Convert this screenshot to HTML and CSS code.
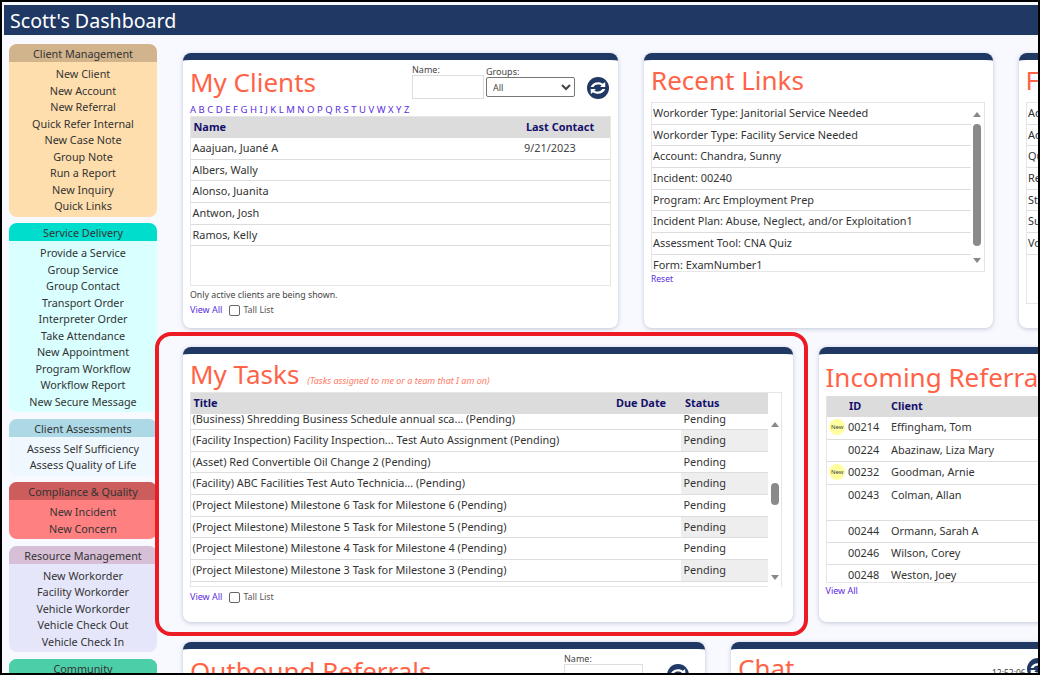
FILE: index.html
```html
<!DOCTYPE html>
<html lang="en">
<head>
    <meta charset="UTF-8">
    <title>Scott's Dashboard</title>
    <link rel="stylesheet" href="styles.css">
</head>
<body>
<div class="frame">
    <div class="topbar">Scott's Dashboard</div>
    <div class="main">
        <!-- Left menu -->
        <div class="sidebar">
            <div class="menu tan">
                <div class="menuHead">Client Management</div>
                <a>New Client</a><a>New Account</a><a>New Referral</a><a>Quick Refer Internal</a><a>New Case Note</a><a>Group Note</a><a>Run a Report</a><a>New Inquiry</a><a>Quick Links</a>
            </div>
            <div class="menu aqua">
                <div class="menuHead">Service Delivery</div>
                <a>Provide a Service</a><a>Group Service</a><a>Group Contact</a><a>Transport Order</a><a>Interpreter Order</a><a>Take Attendance</a><a>New Appointment</a><a>Program Workflow</a><a>Workflow Report</a><a>New Secure Message</a>
            </div>
            <div class="menu blue">
                <div class="menuHead">Client Assessments</div>
                <a>Assess Self Sufficiency</a><a>Assess Quality of Life</a>
            </div>
            <div class="menu red">
                <div class="menuHead">Compliance &amp; Quality</div>
                <a>New Incident</a><a>New Concern</a>
            </div>
            <div class="menu lilac">
                <div class="menuHead">Resource Management</div>
                <a>New Workorder</a><a>Facility Workorder</a><a>Vehicle Workorder</a><a>Vehicle Check Out</a><a>Vehicle Check In</a>
            </div>
            <div class="menu green">
                <div class="menuHead">Community</div>
            </div>
        </div>

        <div class="content">
            <!-- Row 1 -->
            <div class="row row1">
                <div class="card clientsCard">
                    <div class="clientsHead">
                        <h2>My Clients</h2>
                        <div class="field nameField"><label>Name:</label><input type="text" class="nameInput"></div>
                        <div class="field groupField"><label>Groups:</label><select class="groupSelect"><option>All</option></select></div>
                        <svg class="refresh" viewBox="0 0 24 24"><use href="#refreshIcon"/></svg>
                    </div>
                    <div class="alpha"><a>A</a><a>B</a><a>C</a><a>D</a><a>E</a><a>F</a><a>G</a><a>H</a><a>I</a><a>J</a><a>K</a><a>L</a><a>M</a><a>N</a><a>O</a><a>P</a><a>Q</a><a>R</a><a>S</a><a>T</a><a>U</a><a>V</a><a>W</a><a>X</a><a>Y</a><a>Z</a></div>
                    <div class="listBox clientList">
                        <div class="tr th"><span class="grow">Name</span><span class="lastCol">Last Contact</span></div>
                        <div class="tr"><span class="grow">Aaajuan, Juané A</span><span class="lastCol dateVal">9/21/2023</span></div>
                        <div class="tr"><span>Albers, Wally</span></div>
                        <div class="tr"><span>Alonso, Juanita</span></div>
                        <div class="tr"><span>Antwon, Josh</span></div>
                        <div class="tr"><span>Ramos, Kelly</span></div>
                    </div>
                    <div class="note">Only active clients are being shown.</div>
                    <div class="foot"><a>View All</a><span class="box"></span><span>Tall List</span></div>
                </div>

                <div class="card linksCard">
                    <h2>Recent Links</h2>
                    <div class="listBox scrollList linkList">
                        <div class="rows">
                            <div class="tr">Workorder Type: Janitorial Service Needed</div>
                            <div class="tr">Workorder Type: Facility Service Needed</div>
                            <div class="tr">Account: Chandra, Sunny</div>
                            <div class="tr">Incident: 00240</div>
                            <div class="tr">Program: Arc Employment Prep</div>
                            <div class="tr">Incident Plan: Abuse, Neglect, and/or Exploitation1</div>
                            <div class="tr">Assessment Tool: CNA Quiz</div>
                            <div class="tr">Form: ExamNumber1</div>
                        </div>
                        <div class="scrollbar">
                            <div class="arrowUp"></div>
                            <div class="thumbTrack"><div class="thumb linkThumb"></div></div>
                            <div class="arrowDown"></div>
                        </div>
                    </div>
                    <a class="reset">Reset</a>
                </div>

                <div class="card formsCard">
                    <h2>Forms</h2>
                    <div class="listBox formList">
                        <div class="tr">Add</div>
                        <div class="tr">Add</div>
                        <div class="tr">Quick</div>
                        <div class="tr">Refer</div>
                        <div class="tr">Start</div>
                        <div class="tr">Sub</div>
                        <div class="tr">Vouch</div>
                    </div>
                </div>
            </div>

            <!-- Row 2 -->
            <div class="row row2">
                <div class="card tasksCard">
                    <div class="tasksHead"><h2>My Tasks</h2><em>(Tasks assigned to me or a team that I am on)</em></div>
                    <div class="listBox taskList">
                        <div class="tr th taskHeadRow"><span class="grow">Title</span><span class="dueCol">Due Date</span><span class="statusCol">Status</span></div>
                        <div class="taskBody">
                            <div class="rows">
                                <div class="tr first"><span class="grow">(Business) Shredding Business Schedule annual sca... (Pending)</span><span class="pending">Pending</span></div>
                                <div class="tr"><span class="grow">(Facility Inspection) Facility Inspection... Test Auto Assignment (Pending)</span><span class="pending shade">Pending</span></div>
                                <div class="tr"><span class="grow">(Asset) Red Convertible Oil Change 2 (Pending)</span><span class="pending">Pending</span></div>
                                <div class="tr"><span class="grow">(Facility) ABC Facilities Test Auto Technicia... (Pending)</span><span class="pending shade">Pending</span></div>
                                <div class="tr"><span class="grow">(Project Milestone) Milestone 6 Task for Milestone 6 (Pending)</span><span class="pending">Pending</span></div>
                                <div class="tr"><span class="grow">(Project Milestone) Milestone 5 Task for Milestone 5 (Pending)</span><span class="pending shade">Pending</span></div>
                                <div class="tr"><span class="grow">(Project Milestone) Milestone 4 Task for Milestone 4 (Pending)</span><span class="pending">Pending</span></div>
                                <div class="tr"><span class="grow">(Project Milestone) Milestone 3 Task for Milestone 3 (Pending)</span><span class="pending shade">Pending</span></div>
                            </div>
                            <div class="scrollbar taskScroll">
                                <div class="arrowUp"></div>
                                <div class="thumbTrack"><div class="thumb taskThumb"></div></div>
                                <div class="arrowDown"></div>
                            </div>
                        </div>
                    </div>
                    <div class="foot taskFoot"><a>View All</a><span class="box"></span><span>Tall List</span></div>
                </div>

                <div class="card referralCard">
                    <h2>Incoming Referrals</h2>
                    <div class="listBox referralList">
                        <div class="tr th"><span class="newCol"></span><span class="idCol">ID</span><span>Client</span></div>
                        <div class="tr tall"><span class="newCol"><i class="newBadge">New</i></span><span class="idCol">00214</span><span>Effingham, Tom</span></div>
                        <div class="tr"><span class="newCol"></span><span class="idCol">00224</span><span>Abazinaw, Liza Mary</span></div>
                        <div class="tr tall"><span class="newCol"><i class="newBadge">New</i></span><span class="idCol">00232</span><span>Goodman, Arnie</span></div>
                        <div class="tr double"><span class="newCol"></span><span class="idCol">00243</span><span>Colman, Allan</span></div>
                        <div class="tr"><span class="newCol"></span><span class="idCol">00244</span><span>Ormann, Sarah A</span></div>
                        <div class="tr"><span class="newCol"></span><span class="idCol">00246</span><span>Wilson, Corey</span></div>
                        <div class="tr lastRow"><span class="newCol"></span><span class="idCol">00248</span><span>Weston, Joey</span></div>
                    </div>
                    <a class="viewAll">View All</a>
                </div>
            </div>

            <!-- Row 3, cut off by the window -->
            <div class="row row3">
                <div class="card outboundCard">
                    <div class="clientsHead">
                        <h2>Outbound Referrals</h2>
                        <div class="field nameField"><label>Name:</label><input type="text" class="nameInput"></div>
                        <svg class="refresh" viewBox="0 0 24 24"><use href="#refreshIcon"/></svg>
                    </div>
                </div>
                <div class="card chatCard">
                    <h2>Chat</h2>
                    <span class="clock">12:52:06</span>
                    <svg class="refresh chatRefresh" viewBox="0 0 24 24"><use href="#refreshIcon"/></svg>
                </div>
            </div>
        </div>
    </div>

    <!-- Annotation around My Tasks -->
    <div class="callout"></div>
</div>

<svg class="defs" width="0" height="0">
    <symbol id="refreshIcon" viewBox="0 0 24 24">
        <circle cx="12" cy="12" r="12" fill="#1f3864"/>
        <path d="M4 10.8 C5.2 7.4 8.4 5.6 12 5.6 C14.6 5.6 16.2 6.3 17.3 7.3 L19.8 5.4 L20 11 L14.2 11 L16 9.4 C15 8.6 13.8 8.2 12 8.2 C10 8.2 8.2 9 7.2 10.8 Z" fill="#fff"/>
        <path d="M20 13.2 C18.8 16.6 15.6 18.4 12 18.4 C9.4 18.4 7.8 17.7 6.7 16.7 L4.2 18.6 L4 13 L9.8 13 L8 14.6 C9 15.4 10.2 15.8 12 15.8 C14 15.8 15.8 15 16.8 13.2 Z" fill="#fff"/>
    </symbol>
</svg>
</body>
</html>
```

FILE: styles.css
```css
html, body {
    margin: 0;
    padding: 0;
    height: 100%;
    overflow: hidden;
}

body {
    font-family: "Noto Sans", "Open Sans", Arial, sans-serif;
    font-size: 10.9px;
    color: #333;
    background-color: #000;
}

.frame {
    position: relative;
    box-sizing: border-box;
    width: 1040px;
    height: 675px;
    border: 2px solid #000;
    background-color: #f8f9ff;
    overflow: hidden;
}

.topbar {
    height: 30px;
    margin: 3px 0 0 2px;
    padding-left: 6px;
    background-color: #1f3864;
    color: #fff;
    font-size: 19.6px;
    line-height: 31px;
}

.main {
    display: flex;
    padding: 9px 0 0 7px;
}

/* Left menu */
.sidebar {
    flex: none;
    width: 148px;
    display: flex;
    flex-direction: column;
    gap: 6.5px;
}

.menu {
    display: flex;
    flex-direction: column;
    align-items: center;
    padding-bottom: 2px;
    border-radius: 8px;
    overflow: hidden;
    color: #333;
    font-size: 10.8px;
    line-height: 16.5px;
}

.menu a {
    display: block;
}

.menuHead {
    align-self: stretch;
    height: 18px;
    margin-bottom: 4px;
    text-align: center;
    line-height: 19px;
}

.tan { background-color: #ffdead; }
.tan .menuHead { background-color: #d2b48c; }
.aqua { background-color: #d9ffff; }
.aqua .menuHead { background-color: #00ddcc; }
.blue { background-color: #f0f8ff; }
.blue .menuHead { background-color: #add8e6; }
.red { background-color: #ff8080; }
.red .menuHead { background-color: #cd5c5c; }
.lilac { background-color: #e6e6fa; }
.lilac .menuHead { background-color: #d8bfd8; }
.green { background-color: #66cdaa; }
.green .menuHead { background-color: #4ccfa8; }

/* Dashboard cards */
.content {
    flex: none;
    width: 855px;
    margin-left: 26px;
    padding-top: 9px;
    display: flex;
    flex-direction: column;
}

.row {
    display: flex;
    gap: 26px;
}

.row1 { height: 275px; }
.row2 { margin-top: 19px; height: 275px; }
.row3 { margin-top: 20px; }

.card {
    position: relative;
    flex: none;
    box-sizing: border-box;
    background-color: #fff;
    border-top: 7px solid #1f3864;
    border-radius: 8px;
    box-shadow: 0 1px 4px rgba(90, 100, 140, 0.35);
    padding: 0 7px;
}

h2 {
    margin: 0;
    color: #ff6347;
    font-size: 26px;
    font-weight: 400;
    line-height: 38px;
    white-space: nowrap;
}

.clientsCard { width: 435px; }
.linksCard { width: 348.5px; }
.formsCard { width: 100px; }
.tasksCard { width: 609.5px; }
.referralCard { width: 400px; }
.outboundCard { width: 522px; height: 60px; }
.chatCard { width: 400px; height: 60px; }

.clientsHead {
    display: flex;
    height: 43px;
}

.clientsHead h2 {
    width: 222px;
    flex: none;
    padding-top: 3px;
}

.field {
    display: flex;
    flex-direction: column;
    font-size: 9px;
    color: #444;
}

.nameField { width: 74px; padding-top: 3px; }
.nameField label { margin-bottom: -1px; }
.groupField { width: 101px; padding-top: 5px; }
.groupField label { margin-bottom: -1px; }

.nameInput {
    box-sizing: border-box;
    width: 72px;
    height: 24px;
    padding: 0;
    border: 1px solid #ddd;
    background-color: #fff;
}

.groupSelect {
    width: 88.5px;
    height: 20px;
    padding-left: 2px;
    border: 1px solid #777;
    border-radius: 2px;
    background-color: #fff;
    font-family: inherit;
    font-size: 9px;
    color: #444;
}

.refresh {
    width: 22px;
    height: 22px;
    flex: none;
}

.clientsHead .refresh {
    margin-top: 17px;
}

.outboundCard .clientsHead h2 { width: 374px; }
.outboundCard .nameField { width: 103px; }
.outboundCard .nameInput { width: 79px; }
.outboundCard .clientsHead .refresh { margin-top: 15px; }

.alpha {
    display: flex;
    gap: 2.5px;
    height: 13px;
    font-size: 9.5px;
    line-height: 13px;
    color: #5b2de0;
}

.listBox {
    border: 1px solid #e6e6e6;
    box-sizing: border-box;
}

.tr {
    box-sizing: border-box;
    display: flex;
    height: 21.7px;
    padding-left: 1.5px;
    border-bottom: 1px solid #ddd;
    line-height: 20px;
    white-space: nowrap;
    overflow: hidden;
}

.th {
    background-color: #dcdcdc;
    color: #14106b;
    font-weight: 700;
    height: 21px;
    border-bottom: 0;
    padding-left: 2.5px;
}

.grow { flex: 1; min-width: 0; }

.clientList { height: 170px; }
.lastCol { width: 84px; flex: none; }
.dateVal { color: #444; margin-left: -2px; width: 86px; }

.note {
    margin-top: 2px;
    font-size: 8.8px;
    line-height: 14px;
    color: #444;
}

.foot {
    display: flex;
    align-items: center;
    margin-top: 1px;
    font-size: 8.8px;
    line-height: 14px;
    color: #555;
}

.foot a, .viewAll {
    color: #5b2de0;
    font-size: 9px;
    line-height: 14px;
}

.reset {
    display: block;
    color: #5b2de0;
    font-size: 8.5px;
    line-height: 14px;
}

.box {
    box-sizing: border-box;
    width: 11px;
    height: 11px;
    margin: 0 3px 0 7px;
    border: 1px solid #666;
    border-radius: 2px;
}

/* Recent Links */
.scrollList {
    display: flex;
    overflow: hidden;
}

.linksCard h2 { padding-top: 1px; }
.linkList { height: 170px; margin-top: 3px; margin-right: 1px; }
.linkList .tr { padding-left: 1px; }

.rows {
    flex: 1;
    min-width: 0;
    overflow: hidden;
}

.scrollbar {
    flex: none;
    width: 13px;
    display: flex;
    flex-direction: column;
    align-items: center;
    background-color: #fff;
}

.arrowUp, .arrowDown {
    flex: none;
    width: 0;
    height: 0;
    margin: 8.5px 0 7px;
    border-left: 4px solid transparent;
    border-right: 4px solid transparent;
    border-bottom: 5px solid #888;
}

.arrowDown {
    margin: 3px 0 8.5px;
    border-bottom: 0;
    border-top: 5px solid #888;
}

.thumbTrack {
    flex: 1;
    display: flex;
    flex-direction: column;
}

.thumb {
    width: 8px;
    background-color: #8a8a8a;
    border-radius: 4px;
}

.linkThumb { height: 122px; }

.formsCard h2 { padding-top: 1px; }
.formList { height: 202px; margin-top: 3px; }

/* My Tasks */
.tasksHead {
    display: flex;
    align-items: baseline;
    box-sizing: border-box;
    height: 38px;
    padding-top: 1px;
}

.tasksHead em {
    margin-left: 8px;
    color: #ff7a66;
    font-size: 9px;
}

.taskList { height: 195px; margin-right: 3.5px; }
.taskHeadRow { width: 577px; }
.dueCol { width: 69px; flex: none; }
.statusCol { width: 83px; flex: none; }

.taskBody {
    display: flex;
    height: 173px;
    overflow: hidden;
}

.taskBody .first { height: 16px; line-height: 9px; }

.pending {
    width: 87px;
    flex: none;
    padding-left: 2.5px;
    box-sizing: border-box;
}

.shade { background-color: #eee; }
.taskScroll { width: 13px; }
.taskScroll .arrowUp { margin: 7.5px 0 0; }
.taskScroll .arrowDown { margin: 3px 0 7px; }
.thumbTrack .taskThumb { height: 22px; margin-top: 56.5px; }

.taskFoot { margin-top: 3px; }

/* Incoming Referrals */
.referralCard h2 { padding-top: 4px; }
.referralList { height: 187px; border-top: 0; border-right: 0; overflow: hidden; }
.referralList .tr { padding-left: 0; }
.referralList .tall { height: 23px; }
.referralList .tr:not(.tall):not(.th):not(.double):not(.lastRow) { height: 22px; }
.referralList .double { height: 36px; }
.referralList .lastRow { height: 18px; border-bottom: 0; }
.newCol { width: 21.5px; flex: none; display: flex; align-items: flex-start; justify-content: center; }
.idCol { width: 43px; flex: none; }
.newBadge {
    width: 16px;
    height: 16px;
    margin-top: 2px;
    border-radius: 50%;
    background-color: #ffffa0;
    color: #444;
    font-size: 6px;
    font-style: normal;
    line-height: 16px;
    text-align: center;
}
.referralList .th .idCol { padding-left: 1px; box-sizing: border-box; }
.viewAll { display: block; margin-top: 1px; }

/* Row 3 */
.clock { position: absolute; left: 261px; top: 18px; font-size: 8.5px; color: #444; }
.chatRefresh { position: absolute; left: 296px; top: 9px; }

/* Red annotation over the My Tasks card */
.callout {
    position: absolute;
    left: 153px;
    top: 330px;
    width: 653px;
    height: 304px;
    box-sizing: border-box;
    border: 4px solid #ed1c24;
    border-radius: 16px;
    pointer-events: none;
}

.defs { position: absolute; }
```
